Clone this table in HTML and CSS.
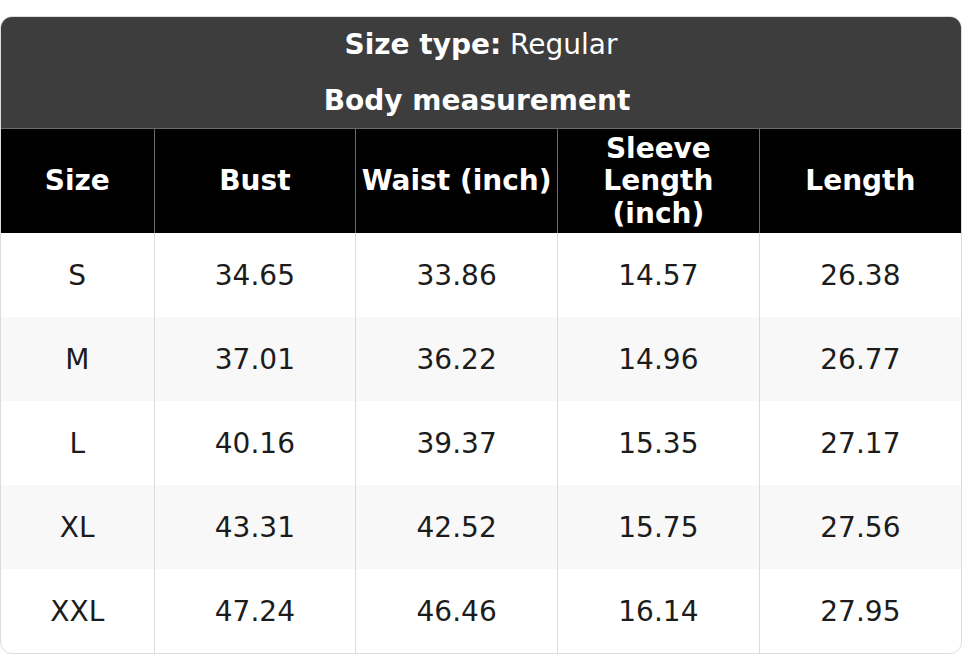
FILE: index.html
```html
<!DOCTYPE html>
<html>
<head>
<meta charset="utf-8">
<link rel="stylesheet" href="styles.css">
</head>
<body>
<div class="card">
  <div class="caption">
    <div class="cap-row"><span><b>Size type:</b> Regular</span></div>
    <div class="cap-row cap-sub"><span><b>Body measurement</b></span></div>
  </div>
  <table class="chart">
    <colgroup>
      <col class="c-first">
      <col class="c-rest">
      <col class="c-rest">
      <col class="c-rest">
      <col class="c-rest">
    </colgroup>
    <thead>
      <tr>
        <th>Size</th>
        <th>Bust</th>
        <th>Waist (inch)</th>
        <th>Sleeve<br>Length<br>(inch)</th>
        <th>Length</th>
      </tr>
    </thead>
    <tbody>
      <tr><td>S</td><td>34.65</td><td>33.86</td><td>14.57</td><td>26.38</td></tr>
      <tr><td>M</td><td>37.01</td><td>36.22</td><td>14.96</td><td>26.77</td></tr>
      <tr><td>L</td><td>40.16</td><td>39.37</td><td>15.35</td><td>27.17</td></tr>
      <tr><td>XL</td><td>43.31</td><td>42.52</td><td>15.75</td><td>27.56</td></tr>
      <tr><td>XXL</td><td>47.24</td><td>46.46</td><td>16.14</td><td>27.95</td></tr>
    </tbody>
  </table>
</div>
</body>
</html>
```

FILE: styles.css
```css
html, body {
  margin: 0;
  padding: 0;
  background: #ffffff;
}
body {
  font-family: "DejaVu Sans", Verdana, sans-serif;
  font-size: 28px;
}
.card {
  margin-top: 16px;
  width: 960px;
  border: 1px solid #dcdcdc;
  border-radius: 12px;
  overflow: hidden;
  background: #ffffff;
}
.caption {
  background: #3d3d3d;
  color: #ffffff;
  height: 111px;
  border-bottom: 1px solid #6a6a6a;
  display: flex;
  flex-direction: column;
}
.cap-row {
  flex: 1;
  display: flex;
  align-items: center;
  justify-content: center;
  line-height: 1;
  padding-top: 1px;
}
.cap-sub {
  padding-right: 8px;
}
.chart {
  width: 100%;
  border-collapse: collapse;
  table-layout: fixed;
}
.c-first { width: 153px; }
.chart th {
  background: #000000;
  color: #ffffff;
  font-weight: bold;
  height: 104px;
  line-height: 32.5px;
  padding: 1px 4px 0;
  text-align: center;
  vertical-align: middle;
  border-left: 1px solid #6a6a6a;
  box-sizing: border-box;
}
.chart th:first-child { border-left: none; }
.chart td {
  height: 84px;
  padding: 1px 0 0;
  text-align: center;
  vertical-align: middle;
  color: #1c1c1c;
  border-left: 1px solid #dcdcdc;
  line-height: 1;
  box-sizing: border-box;
}
.chart td:first-child { border-left: none; }
.chart tbody tr:nth-child(even) td { background: #f8f8f8; }
```
